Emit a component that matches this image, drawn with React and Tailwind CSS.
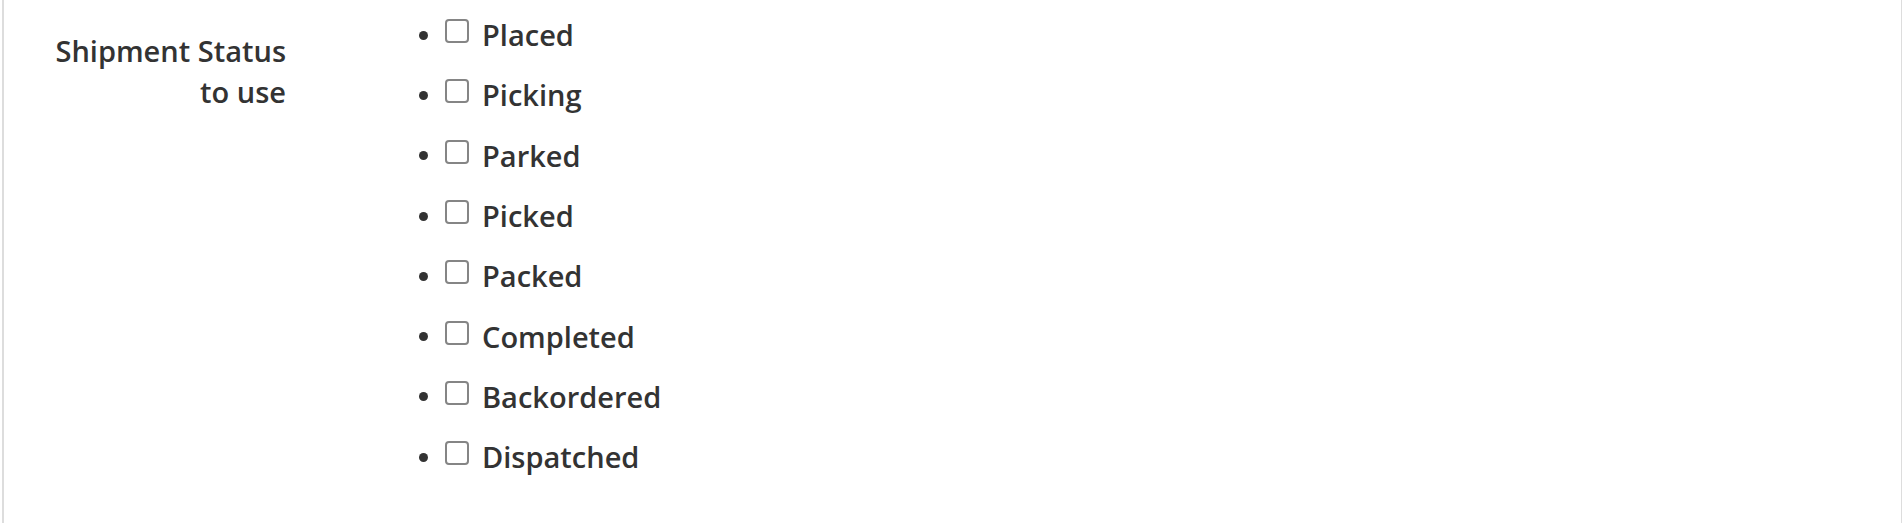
import React from "react";

const statuses = [
  "Placed",
  "Picking",
  "Parked",
  "Picked",
  "Packed",
  "Completed",
  "Backordered",
  "Dispatched",
];

const App = () => {
  return (
    <div
      className="ml-[2px] h-[523px] border-l-2 border-r border-[#dddddd] bg-white text-[#333333]"
      style={{ fontFamily: "'Open Sans', 'Liberation Sans', sans-serif" }}
    >
      <div className="flex">
        {/* Label column */}
        <div className="w-[282px] flex justify-end pt-[30px]">
          <label className="w-[245px] text-right text-[29px] leading-[41px] font-semibold">
            Shipment Status to use
          </label>
        </div>

        {/* Options list */}
        <ul className="ml-[133px] pt-[5px] flex flex-col">
          {statuses.map((s) => (
            <li key={s} className="h-[60.3px] flex items-center">
              <span className="w-[9px] h-[9px] rounded-full bg-[#333333]" />
              <span className="ml-[17px] mb-[8px] w-[24px] h-[24px] rounded-[4px] border-2 border-[#858585] bg-white" />
              <span className="ml-[13px] text-[29px] leading-[38px] font-semibold">
                {s}
              </span>
            </li>
          ))}
        </ul>
      </div>
    </div>
  );
};

export default App;
